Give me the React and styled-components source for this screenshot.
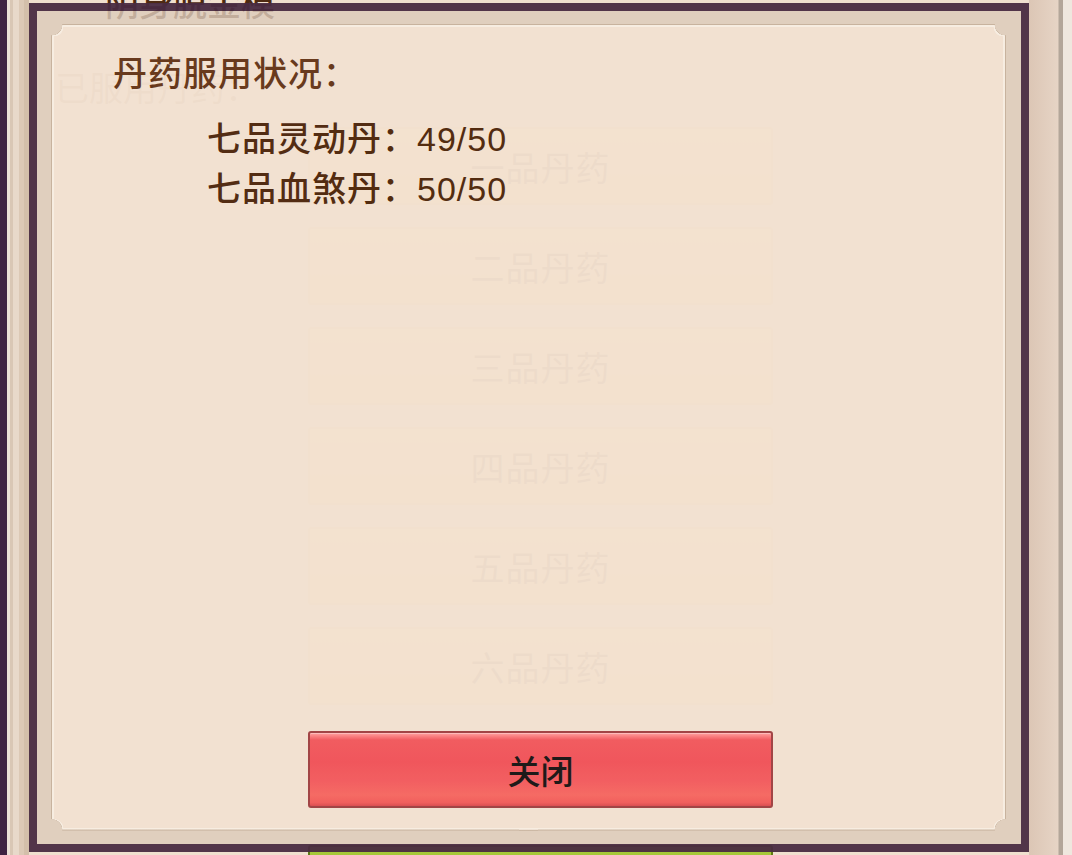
import React from "react";
import styled, { createGlobalStyle } from "styled-components";

const GlobalStyle = createGlobalStyle`
  html, body {
    margin: 0;
    padding: 0;
    background: #efe1d2;
  }
  body {
    font-family: "Liberation Sans", "Noto Sans CJK SC", sans-serif;
  }
`;

const FONT = `"Liberation Sans", "Noto Sans CJK SC", sans-serif`;

// notched (concave) corners, used for the inner panel edge lines
const notch = (c, r) => `
  background:
    radial-gradient(circle at 0 0, transparent ${r}px, ${c} ${r + 0.6}px) top left / 51% 51% no-repeat,
    radial-gradient(circle at 100% 0, transparent ${r}px, ${c} ${r + 0.6}px) top right / 51% 51% no-repeat,
    radial-gradient(circle at 0 100%, transparent ${r}px, ${c} ${r + 0.6}px) bottom left / 51% 51% no-repeat,
    radial-gradient(circle at 100% 100%, transparent ${r}px, ${c} ${r + 0.6}px) bottom right / 51% 51% no-repeat;
`;

const Stage = styled.div`
  position: relative;
  width: 1072px;
  height: 855px;
  overflow: hidden;
  font-family: ${FONT};
  background: linear-gradient(
    to right,
    #3e2242 0 7px,
    #ebe0d6 7px 10px,
    #d9c7b5 10px 13px,
    #e8d9ca 13px 19px,
    #dcc9b6 19px 24px,
    #d3bfaa 24px 29px,
    #f0e0cf 29px,
    #f0e0cf 1029px,
    #dcc6b5 1029px,
    #e6d4c5 1058px,
    #b3a699 1059px 1063px,
    #efe7de 1063px
  );
`;

const BgContent = styled.div`
  display: flex;
  flex-direction: column;
`;

const BgTitle = styled.div`
  margin: -16px 0 0 105px;
  height: 40px;
  line-height: 40px;
  font-size: 34px;
  color: #4e2a12;
  font-weight: 500;
`;

const BgLabel = styled.div`
  margin: 45px 0 0 55px;
  height: 40px;
  line-height: 40px;
  font-size: 34px;
  color: #9a7656;
`;

const BgList = styled.div`
  margin: 18px 0 0 308px;
  display: flex;
  flex-direction: column;
  gap: 22px;
  width: 465px;
`;

const BgButton = styled.div`
  box-sizing: border-box;
  height: 78px;
  margin-top: ${(p) => (p.$gap ? `${p.$gap}px` : 0)};
  display: flex;
  align-items: center;
  justify-content: center;
  font-size: 34px;
  letter-spacing: 1px;
  color: ${(p) => (p.$green ? "#2c3a08" : "#8a6443")};
  border: 2px solid ${(p) => (p.$green ? "#5e7a14" : "#e3c587")};
  border-radius: 3px;
  background: ${(p) =>
    p.$green
      ? "linear-gradient(#a8cb3a, #8db52a)"
      : "linear-gradient(#f9e4a8, #f5d68c)"};
`;

const Modal = styled.div`
  position: absolute;
  left: 29px;
  top: 3px;
  width: 1000px;
  height: 849px;
  box-sizing: border-box;
  border: 8px solid #4a2c42;
  background: rgba(221, 204, 187, 0.86);
  padding: 13px 15px 13px 14px;
  opacity: 0.95;
  display: flex;
`;

const PanelLine = styled.div`
  flex: 1;
  display: flex;
  padding: 1px;
  ${notch("#c6b19c", 11)}
`;

const PanelLight = styled.div`
  flex: 1;
  display: flex;
  padding: 2px;
  ${notch("#f8eee3", 10)}
`;

const Panel = styled.div`
  flex: 1;
  display: flex;
  flex-direction: column;
  ${notch("#f3e2d2", 9)}
  padding: 27px 0 20px 59px;
`;

const Heading = styled.div`
  font-size: 34px;
  line-height: 40px;
  letter-spacing: 1px;
  color: #623214;
  font-weight: 500;
`;

const Items = styled.div`
  margin: 20px 0 0 94px;
  display: flex;
  flex-direction: column;
`;

const Item = styled.div`
  font-size: 34px;
  line-height: 50px;
  letter-spacing: 1px;
  color: #4b2309;
  font-weight: 500;
`;

const CloseButton = styled.button`
  margin: auto 0 0 195px;
  width: 465px;
  height: 77px;
  box-sizing: border-box;
  border: 2px solid #9e3d3f;
  border-radius: 3px;
  font-family: ${FONT};
  font-size: 33px;
  font-weight: 500;
  color: #141010;
  cursor: pointer;
  background: linear-gradient(
    to bottom,
    #ffa0a0 0,
    #fb7e80 3px,
    #f2555b 7px,
    #f14f56 40%,
    #f3585c 65%,
    #f6655f 85%,
    #f25a58 95%,
    #d9484c 100%
  );
  box-shadow: inset 0 1px 0 rgba(255, 200, 200, 0.7);
`;

const tiers = ["一品丹药", "二品丹药", "三品丹药", "四品丹药", "五品丹药", "六品丹药"];

const usage = [
  { name: "七品灵动丹", used: 49, max: 50 },
  { name: "七品血煞丹", used: 50, max: 50 },
];

export default function App() {
  return (
    <>
      <GlobalStyle />
      <Stage>
        <BgContent>
          <BgTitle>阴身脱金模</BgTitle>
          <BgLabel>已服用丹药：</BgLabel>
          <BgList>
            {tiers.map((t) => (
              <BgButton key={t}>{t}</BgButton>
            ))}
            <BgButton $green $gap={118}>
              七品丹药
            </BgButton>
          </BgList>
        </BgContent>

        <Modal>
          <PanelLine>
            <PanelLight>
              <Panel>
                <Heading>丹药服用状况：</Heading>
                <Items>
                  {usage.map((u) => (
                    <Item key={u.name}>
                      {u.name}：{u.used}/{u.max}
                    </Item>
                  ))}
                </Items>
                <CloseButton>关闭</CloseButton>
              </Panel>
            </PanelLight>
          </PanelLine>
        </Modal>
      </Stage>
    </>
  );
}
